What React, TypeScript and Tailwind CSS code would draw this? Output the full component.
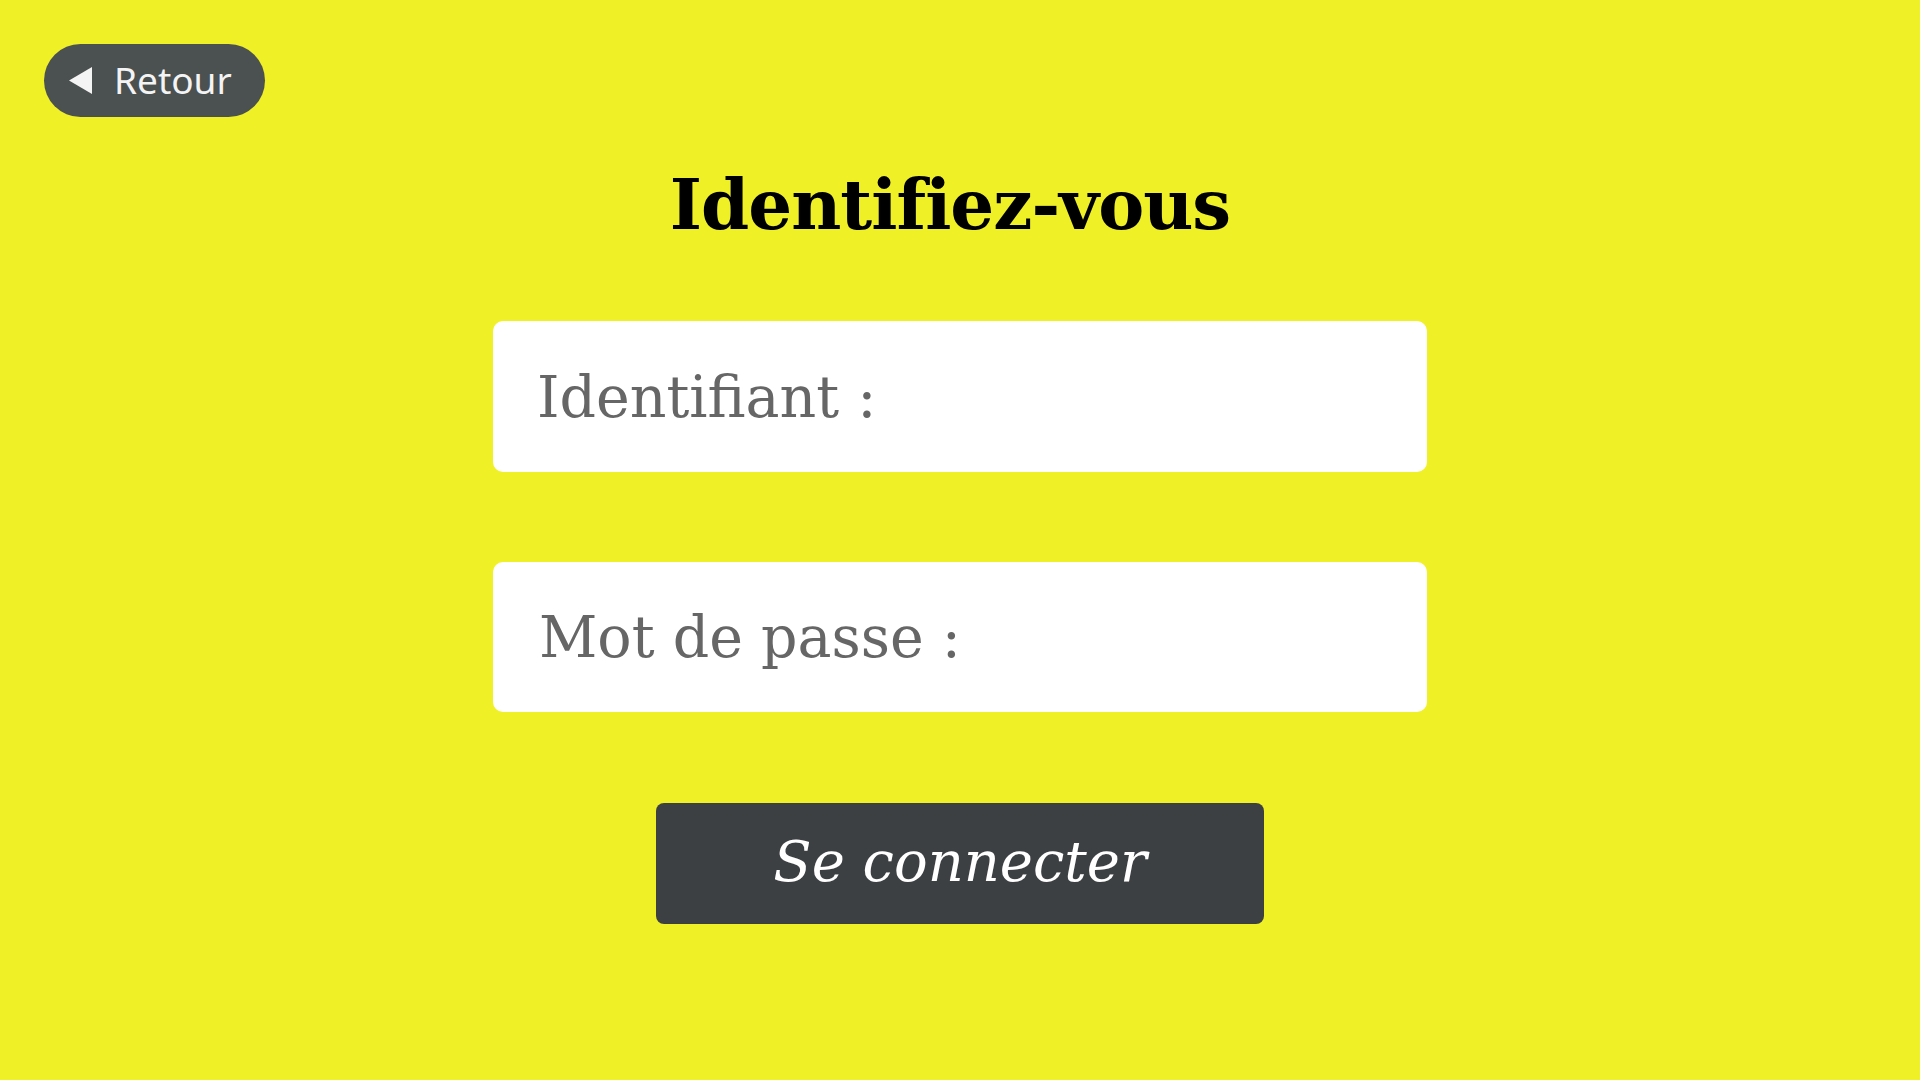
import { useState } from "react";

/* Login screen — yellow kiosk style */
export default function App() {
  const [login, setLogin] = useState("");
  const [password, setPassword] = useState("");

  return (
    <div className="min-h-screen w-full bg-[#eff026] px-[44px] pt-[44px]">
      {/* ── Back button ── */}
      <button
        type="button"
        className="flex h-[73px] w-[221px] items-center gap-[22px] rounded-full bg-[#4b5051] pl-[25px] text-[#f4f4f4]"
      >
        <svg width="23" height="27" viewBox="0 0 23 27" aria-hidden>
          <polygon points="23,0 23,27 0,13.5" fill="#f4f4f4" />
        </svg>
        <span className="-mt-[3px] font-['Noto_Sans',sans-serif] text-[37px] leading-none">Retour</span>
      </button>

      {/* ── Form ── */}
      <main className="flex flex-col items-center">
        <h1 className="mr-[20px] mt-[45px] font-['DejaVu_Serif',serif] text-[69px] font-bold leading-[86px] tracking-[-1px] text-black">
          Identifiez-vous
        </h1>

        <input
          value={login}
          onChange={(e) => setLogin(e.target.value)}
          placeholder="Identifiant :"
          className="mt-[73px] h-[151px] w-[934px] rounded-[10px] bg-white pl-[44px] font-['DejaVu_Serif',serif] text-[57px] text-[#666] outline-none placeholder:text-[#666]"
        />

        <input
          type="password"
          value={password}
          onChange={(e) => setPassword(e.target.value)}
          placeholder="Mot de passe :"
          className="mt-[90px] h-[150px] w-[934px] rounded-[10px] bg-white pl-[46px] font-['DejaVu_Serif',serif] text-[57px] text-[#666] outline-none placeholder:text-[#666]"
        />

        <button
          type="button"
          className="mt-[91px] h-[121px] w-[608px] rounded-[8px] bg-[#3d4043] pb-[4px] font-['DejaVu_Serif',serif] text-[56px] italic text-white"
        >
          Se connecter
        </button>
      </main>
    </div>
  );
}
